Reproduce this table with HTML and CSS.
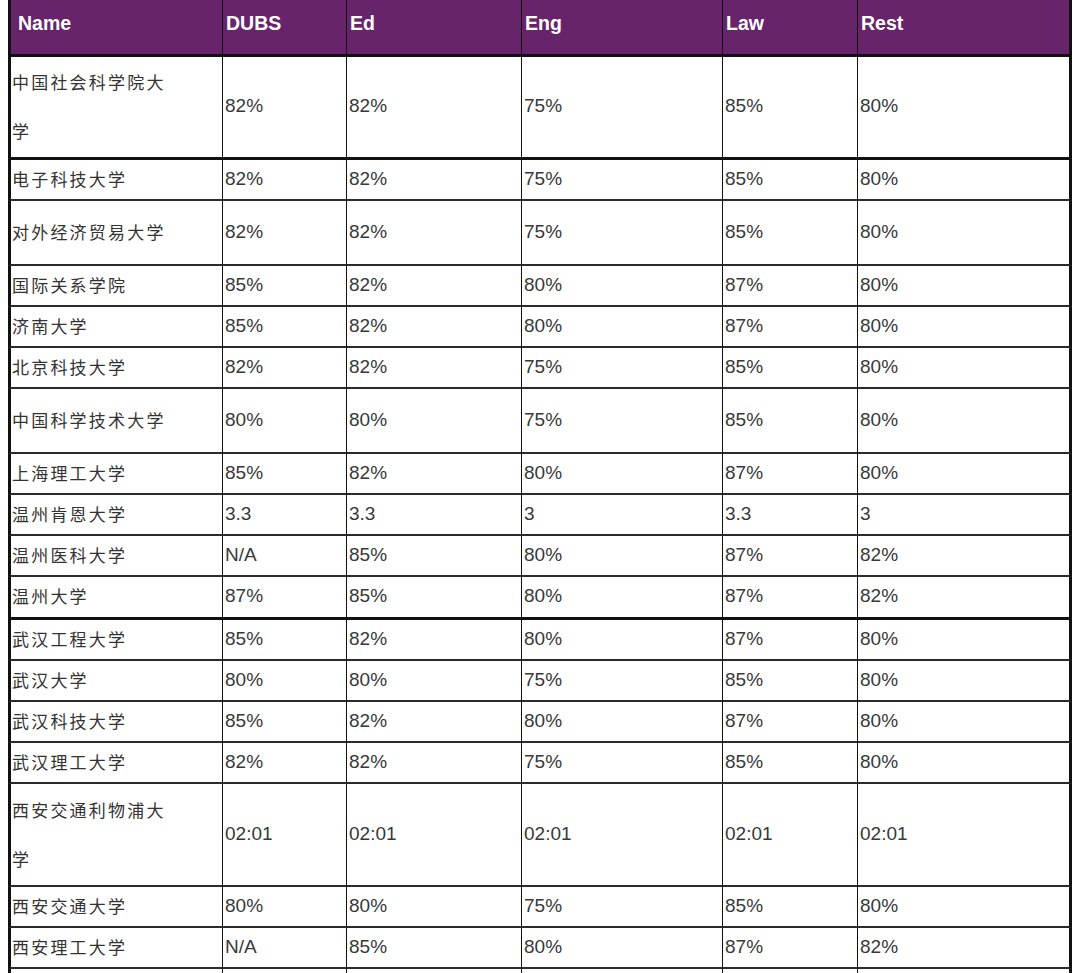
FILE: index.html
```html
<!DOCTYPE html>
<html lang="zh">
<head>
<meta charset="utf-8">
<title>Entry requirements</title>
<link rel="stylesheet" href="styles.css">
</head>
<body>
<div class="page">
<table class="grades">
  <colgroup>
    <col class="c-name"><col class="c-dubs"><col class="c-ed"><col class="c-eng"><col class="c-law"><col class="c-rest">
  </colgroup>
  <thead>
    <tr class="head">
      <th class="first">Name</th><th>DUBS</th><th>Ed</th><th>Eng</th><th>Law</th><th class="last">Rest</th>
    </tr>
  </thead>
  <tbody>
    <tr class="double thick"><td class="name"><span class="wrap">中国社会科学院大学</span></td><td>82%</td><td>82%</td><td>75%</td><td>85%</td><td class="last">80%</td></tr>
    <tr><td class="name">电子科技大学</td><td>82%</td><td>82%</td><td>75%</td><td>85%</td><td class="last">80%</td></tr>
    <tr class="tall"><td class="name">对外经济贸易大学</td><td>82%</td><td>82%</td><td>75%</td><td>85%</td><td class="last">80%</td></tr>
    <tr><td class="name">国际关系学院</td><td>85%</td><td>82%</td><td>80%</td><td>87%</td><td class="last">80%</td></tr>
    <tr><td class="name">济南大学</td><td>85%</td><td>82%</td><td>80%</td><td>87%</td><td class="last">80%</td></tr>
    <tr><td class="name">北京科技大学</td><td>82%</td><td>82%</td><td>75%</td><td>85%</td><td class="last">80%</td></tr>
    <tr class="tall"><td class="name">中国科学技术大学</td><td>80%</td><td>80%</td><td>75%</td><td>85%</td><td class="last">80%</td></tr>
    <tr><td class="name">上海理工大学</td><td>85%</td><td>82%</td><td>80%</td><td>87%</td><td class="last">80%</td></tr>
    <tr><td class="name">温州肯恩大学</td><td>3.3</td><td>3.3</td><td>3</td><td>3.3</td><td class="last">3</td></tr>
    <tr><td class="name">温州医科大学</td><td>N/A</td><td>85%</td><td>80%</td><td>87%</td><td class="last">82%</td></tr>
    <tr class="thick"><td class="name">温州大学</td><td>87%</td><td>85%</td><td>80%</td><td>87%</td><td class="last">82%</td></tr>
    <tr><td class="name">武汉工程大学</td><td>85%</td><td>82%</td><td>80%</td><td>87%</td><td class="last">80%</td></tr>
    <tr><td class="name">武汉大学</td><td>80%</td><td>80%</td><td>75%</td><td>85%</td><td class="last">80%</td></tr>
    <tr><td class="name">武汉科技大学</td><td>85%</td><td>82%</td><td>80%</td><td>87%</td><td class="last">80%</td></tr>
    <tr><td class="name">武汉理工大学</td><td>82%</td><td>82%</td><td>75%</td><td>85%</td><td class="last">80%</td></tr>
    <tr class="double"><td class="name"><span class="wrap">西安交通利物浦大学</span></td><td>02:01</td><td>02:01</td><td>02:01</td><td>02:01</td><td class="last">02:01</td></tr>
    <tr><td class="name">西安交通大学</td><td>80%</td><td>80%</td><td>75%</td><td>85%</td><td class="last">80%</td></tr>
    <tr><td class="name">西安理工大学</td><td>N/A</td><td>85%</td><td>80%</td><td>87%</td><td class="last">82%</td></tr>
    <tr><td class="name">&nbsp;</td><td></td><td></td><td></td><td></td><td class="last"></td></tr>
  </tbody>
</table>
</div>
</body>
</html>
```

FILE: styles.css
```css
html, body {
  margin: 0;
  padding: 0;
  background: #ffffff;
}

.page {
  padding-left: 8px;
}

.grades {
  width: 1064px;
  table-layout: fixed;
  border-collapse: separate;
  border-spacing: 0;
  font-family: "Liberation Sans", Arial, "Noto Sans CJK SC", sans-serif;
  font-size: 19px;
  color: #383838;
}

.c-name { width: 215px; }
.c-dubs { width: 124px; }
.c-ed   { width: 175px; }
.c-eng  { width: 201px; }
.c-law  { width: 135px; }
.c-rest { width: 214px; }

.grades th,
.grades td {
  box-sizing: border-box;
  border-right: 1px solid #111111;
  border-bottom: 2px solid #2b2b2b;
  padding: 0 0 2px 2px;
  text-align: left;
  vertical-align: middle;
  line-height: 22px;
  height: 41px;
}

.grades th.first,
.grades td.name {
  border-left: 3px solid #111111;
}

.grades th.last,
.grades td.last {
  border-right: 3px solid #111111;
}

.head th {
  background: #68246b;
  color: #ffffff;
  font-weight: bold;
  font-size: 19.5px;
  height: 57px;
  vertical-align: top;
  padding-top: 12px;
  padding-left: 3px;
  border-right-color: #111111;
  border-bottom: 3px solid #111111;
}

.head th.first {
  padding-left: 7px;
}

.grades td.name {
  font-family: "Noto Sans CJK SC", "Liberation Sans", sans-serif;
  font-size: 17px;
  letter-spacing: 2.2px;
  color: #333333;
  padding-left: 1px;
}

.wrap {
  display: block;
  max-width: 166px;
  line-height: 49px;
}

.tall td { height: 65px; }
.double td { height: 103px; }
.thick td { border-bottom: 3px solid #111111; }
tr.thick:not(.double) td { height: 43px; }
```
